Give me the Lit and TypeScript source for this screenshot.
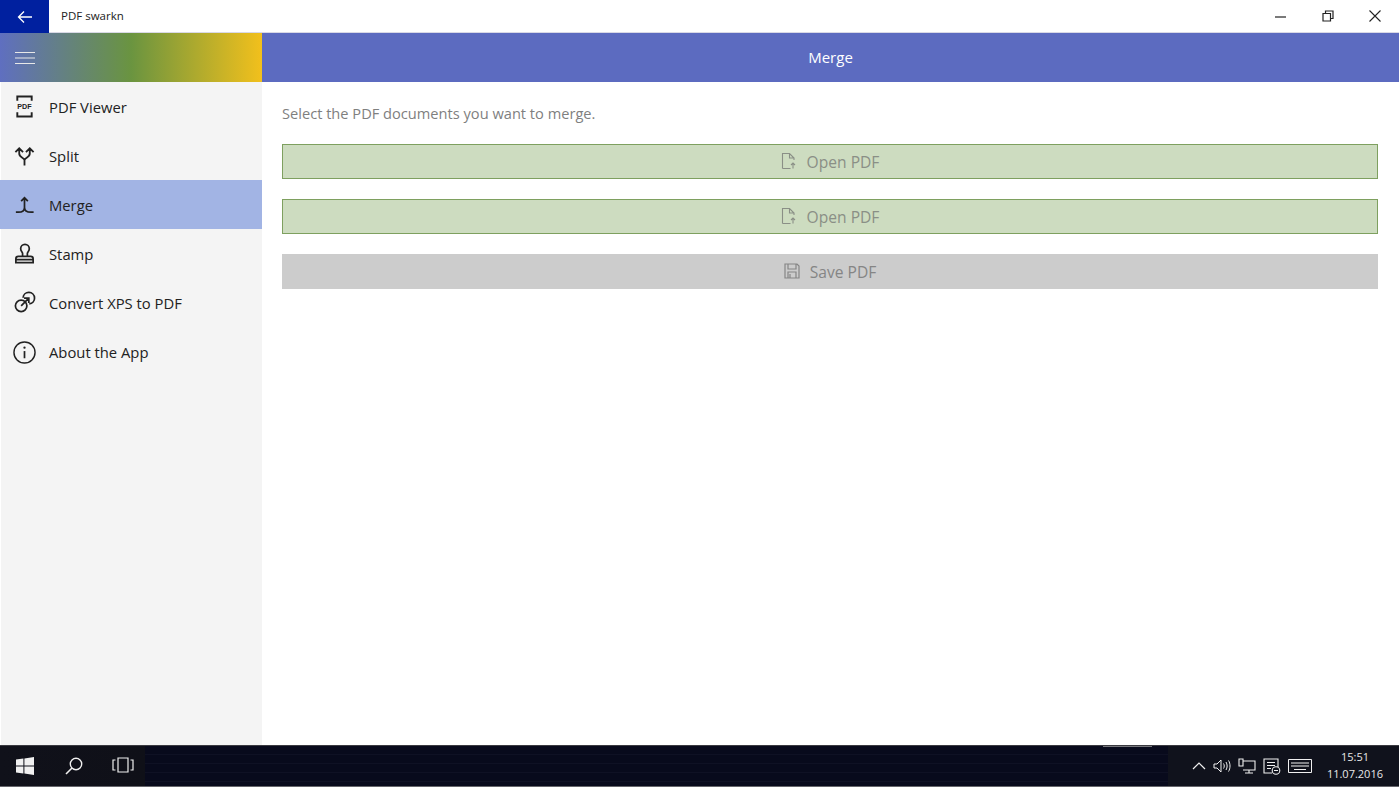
import { LitElement, html, css, svg } from "lit";
import { customElement } from "lit/decorators.js";

const navIcons: Record<string, unknown> = {
  pdf: svg`<path d="M4.500 6V1.500h15V6M4.500 18v4.500h15V18" fill="none" stroke="currentColor" stroke-width="2"/><text x="12" y="14.800" text-anchor="middle" font-family="Liberation Sans" font-weight="700" font-size="7.500" fill="currentColor">PDF</text>`,
  split: svg`<path d="M12 22.500v-6M12 17c0-3-5.500-2.500-5.500-7V4.500M12 17c0-3 5.500-2.500 5.500-7V4.500M2.500 8.500l4-4 4 4M13.500 8.500l4-4 4 4" fill="none" stroke="currentColor" stroke-width="1.900"/>`,
  merge: svg`<path d="M3 20h2.500c4 0 6.500-1 6.500-5V5M21.500 20H19c-4 0-7-1-7-5M8.500 8.500 12 5l3.500 3.500" fill="none" stroke="currentColor" stroke-width="1.800"/>`,
  stamp: svg`<path d="M10 15v-3c0-1.500-2-2.500-2-5a4.500 4.500 0 0 1 9 0c0 2.500-2 3.500-2 5v3" fill="none" stroke="currentColor" stroke-width="1.800"/><path d="M3 21.500v-4c0-1.500 1-2.500 2.500-2.500h13c1.500 0 2.500 1 2.500 2.500v4zM3 18.500h18" fill="none" stroke="currentColor" stroke-width="1.800"/>`,
  link: svg`<circle cx="8.500" cy="15.500" r="6" fill="none" stroke="currentColor" stroke-width="1.800"/><path d="M10.500 7a6 6 0 1 1 6.500 6.500M8.500 15.500 16 8M11.500 7.500H16.500V12.500" fill="none" stroke="currentColor" stroke-width="1.800"/>`,
  info: svg`<circle cx="12" cy="12" r="11" fill="none" stroke="currentColor" stroke-width="1.500"/><path d="M12 10.500V18" stroke="currentColor" stroke-width="1.800"/><circle cx="12" cy="7" r="1.200" fill="currentColor"/>`,
};

const navItems = [
  { icon: "pdf", label: "PDF Viewer" },
  { icon: "split", label: "Split" },
  { icon: "merge", label: "Merge", active: true },
  { icon: "stamp", label: "Stamp" },
  { icon: "link", label: "Convert XPS to PDF" },
  { icon: "info", label: "About the App" },
];

const openIcon = svg`<path d="M1.500 15.500V.5h7l4.500 4.500v2M8.500.5v4.500H13M1.500 15.500H9.500M12 15.500V10M10 12l2-2 2 2" fill="none" stroke="currentColor" stroke-width="1.100"/>`;
const saveIcon = svg`<path d="M1 1h12l2 2v12H1zM4 1v5h8V1M4 15V9h8v6M6 11v4" fill="none" stroke="currentColor" stroke-width="1.200"/>`;

@customElement("app-root")
export class AppRoot extends LitElement {
  static styles = css`
    :host {
      display: flex;
      flex-direction: column;
      height: 787px;
      width: 1399px;
      overflow: hidden;
      background: #fff;
      font-family: "Open Sans", "Liberation Sans", sans-serif;
      color: #222;
    }
    .titlebar {
      height: 32px;
      flex: none;
      display: flex;
      align-items: center;
      background: #fff;
      border-bottom: 1px solid #d9d9e6;
    }
    .back {
      width: 49px;
      height: 33px;
      margin-bottom: -1px;
      background: #00209f;
      color: #fff;
      display: flex;
      align-items: center;
      justify-content: center;
    }
    .app-name {
      margin: -2px 0 0 12px;
      font-size: 11.500px;
      color: #222;
      flex: 1;
    }
    .win {
      display: flex;
      align-items: center;
      color: #222;
      margin-right: 1px;
    }
    .win span {
      width: 47px;
      display: flex;
      justify-content: center;
    }
    .header {
      height: 49px;
      flex: none;
      display: flex;
    }
    .burger {
      width: 262px;
      background: linear-gradient(90deg, #5f6fc0 0%, #6a9440 50%, #f2c01c 100%);
      display: flex;
      align-items: center;
      padding-left: 15px;
      box-sizing: border-box;
      color: #e8e8e8;
    }
    .title {
      flex: 1;
      background: #5c6bc0;
      color: #fff;
      display: flex;
      align-items: center;
      justify-content: center;
      font-size: 15px;
      padding: 0 0 2px 0;
    }
    .body {
      flex: 1;
      display: flex;
      min-height: 0;
    }
    nav {
      width: 262px;
      box-sizing: border-box;
      background: #f4f4f4;
      border-left: 1px solid #fff;
      flex: none;
    }
    .item {
      height: 49.100px;
      display: flex;
      align-items: center;
      gap: 13px;
      padding-left: 12px;
      font-size: 14.800px;
      color: #222;
    }
    .item.active {
      background: #a2b4e4;
      margin-left: -1px;
      padding-left: 13px;
    }
    .item svg {
      width: 23px;
      height: 23px;
      flex: none;
    }
    main {
      flex: 1;
      padding: 21px 21px 0 20px;
      display: flex;
      flex-direction: column;
    }
    .hint {
      font-size: 14.640px;
      color: #7f7f7f;
      line-height: 20px;
      margin-bottom: 21px;
    }
    .btn {
      height: 35px;
      box-sizing: border-box;
      margin-bottom: 20px;
      display: flex;
      align-items: center;
      justify-content: center;
      gap: 10px;
      font-size: 15.600px;
      color: #8a8f86;
    }
    .btn svg {
      width: 16px;
      height: 16px;
      margin-top: -2px;
    }
    .open {
      background: #cddcc0;
      border: 1px solid #7ea05f;
    }
    .save {
      background: #cccccc;
      color: #858585;
    }
    .taskbar {
      height: 42px;
      flex: none;
      background:
        linear-gradient(90deg, transparent 1103px, #77777c 1103px, #77777c 1152px, transparent 1152px) top / 100% 1px no-repeat,
        linear-gradient(90deg, #10111a 0, #0f1018 145px, transparent 145px, transparent 1168px, #10121c 1168px),
        repeating-linear-gradient(180deg, #080a1c 0, #080a1c 8px, #0f1124 8px, #0f1124 9px);
      border-top: 1px solid #3a3a40;
      border-bottom: 1px solid #66666c;
      box-sizing: border-box;
      display: flex;
      align-items: center;
      color: #f0f0f0;
    }
    .tb-left {
      display: flex;
      flex: 1;
    }
    .tb-left span {
      width: 49px;
      display: flex;
      justify-content: center;
    }
    .tray {
      display: flex;
      align-items: center;
      gap: 7px;
      padding-right: 16px;
    }
    .clock {
      margin-left: 8px;
      font-size: 11px;
      line-height: 17px;
      text-align: center;
      color: #e8e8e8;
      margin-top: -3px;
    }
    svg { display: block; }
  `;

  render() {
    return html`
      <div class="titlebar">
        <div class="back">
          <svg width="16" height="14" viewBox="0 0 16 14"><path d="M15 7H1.500M7 1.500 1.500 7 7 12.500" fill="none" stroke="currentColor" stroke-width="1.300"/></svg>
        </div>
        <div class="app-name">PDF swarkn</div>
        <div class="win">
          <span><svg width="11" height="11" viewBox="0 0 11 11"><path d="M0 6h11" stroke="currentColor" stroke-width="1.200"/></svg></span>
          <span><svg width="12" height="12" viewBox="0 0 12 12"><path d="M1 3.500h7.500V11H1zM3.500 3.500V1H11v7.500H8.500" fill="none" stroke="currentColor" stroke-width="1.200"/></svg></span>
          <span><svg width="12" height="12" viewBox="0 0 12 12"><path d="m.5.500 11 11M11.500.5l-11 11" stroke="currentColor" stroke-width="1.100"/></svg></span>
        </div>
      </div>
      <div class="header">
        <div class="burger">
          <svg width="20" height="14" viewBox="0 0 20 14"><path d="M0 1.500h20M0 7h20M0 12.500h20" stroke="currentColor" stroke-width="1.200"/></svg>
        </div>
        <div class="title">Merge</div>
      </div>
      <div class="body">
        <nav>
          ${navItems.map(
            (n) => html`<div class="item ${n.active ? "active" : ""}">
              <svg viewBox="0 0 24 24">${navIcons[n.icon]}</svg><span>${n.label}</span>
            </div>`
          )}
        </nav>
        <main>
          <div class="hint">Select the PDF documents you want to merge.</div>
          <div class="btn open"><svg viewBox="0 0 16 16">${openIcon}</svg>Open PDF</div>
          <div class="btn open"><svg viewBox="0 0 16 16">${openIcon}</svg>Open PDF</div>
          <div class="btn save"><svg viewBox="0 0 16 16">${saveIcon}</svg>Save PDF</div>
        </main>
      </div>
      <div class="taskbar">
        <div class="tb-left">
          <span><svg width="18" height="18" viewBox="0 0 18 18"><path d="M0 2.600 7.400 1.500V8.500H0zM8.400 1.400 18 0V8.500H8.400zM0 9.500h7.400v7L0 15.400zM8.400 9.500H18V18L8.400 16.600z" fill="currentColor"/></svg></span>
          <span><svg width="18" height="18" viewBox="0 0 18 18"><circle cx="11" cy="7" r="5.700" fill="none" stroke="currentColor" stroke-width="1.400"/><path d="M7 11 1 17" stroke="currentColor" stroke-width="1.600"/></svg></span>
          <span><svg width="22" height="16" viewBox="0 0 22 16"><path d="M6 1h10v14H6zM3.500 3H1v10h2.500M18.500 3H21v10h-2.500" fill="none" stroke="currentColor" stroke-width="1.200"/></svg></span>
        </div>
        <div class="tray">
          <svg width="14" height="8" viewBox="0 0 14 8"><path d="m1 7 6-6 6 6" fill="none" stroke="currentColor" stroke-width="1.200"/></svg>
          <svg width="18" height="14" viewBox="0 0 18 14"><path d="M1 5h3l4-4v12L4 9H1zM10.500 4.500c1 1.500 1 3.500 0 5M13 3c1.500 2.500 1.500 5.500 0 8M15.500 1.500c2 3 2 8 0 11" fill="none" stroke="currentColor" stroke-width="1"/></svg>
          <svg width="18" height="16" viewBox="0 0 18 16"><path d="M1 1h4v7H1zM5 3h12v9H5M11 12v3M7 15h8" fill="none" stroke="currentColor" stroke-width="1.100"/></svg>
          <svg width="18" height="17" viewBox="0 0 18 17"><path d="M9 15H1V1h14v8M4 4.500h8M4 7.500h8M4 10.500h4" fill="none" stroke="currentColor" stroke-width="1.100"/><circle cx="13" cy="12.500" r="3.800" fill="none" stroke="currentColor" stroke-width="1.100"/><path d="M11 12.500h4" stroke="currentColor"/></svg>
          <svg width="24" height="14" viewBox="0 0 24 14"><path d="M.5.500h23v13H.5zM3 4h18M3 7h18M6 10.500h12" fill="none" stroke="currentColor" stroke-width="1"/></svg>
          <div class="clock">15:51<br />11.07.2016</div>
        </div>
      </div>
    `;
  }
}
